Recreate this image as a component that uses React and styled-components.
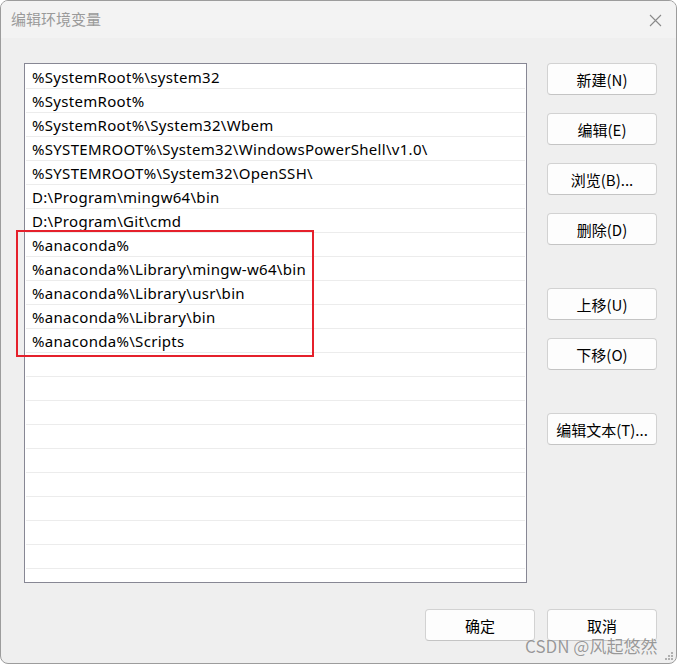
import React from "react";
import styled, { createGlobalStyle } from "styled-components";

const Global = createGlobalStyle`
  html, body { margin: 0; padding: 0; background: #ffffff; }
  body { font-family: "Noto Sans", "Noto Sans CJK SC", sans-serif; }
  * { box-sizing: border-box; }
`;

const Window = styled.div`
  position: relative;
  width: 677px;
  height: 664px;
  background: #efefef;
  border: 1px solid #9c9c9c;
  border-radius: 8px;
  overflow: hidden;
  display: flex;
  flex-direction: column;
`;

const TitleBar = styled.div`
  height: 37px;
  background: #f3f3f3;
  display: flex;
  align-items: center;
  justify-content: space-between;
  padding: 0 14px 0 10px;
`;

const Title = styled.span`
  font-family: "Noto Sans CJK SC", sans-serif;
  font-size: 15px;
  color: #9a9a9a;
  line-height: 1;
  margin-top: -3px;
`;

const Close = styled.div`
  width: 14px;
  height: 14px;
  display: flex;
  align-items: center;
  justify-content: center;
  margin-top: 1px;
`;

const Body = styled.div`
  display: flex;
  gap: 20px;
  padding: 25px 19px 0 23px;
`;

const List = styled.div`
  width: 504px;
  height: 520px;
  background: #ffffff;
  border: 1px solid #878794;
  padding: 1px 1px;
  overflow: hidden;
`;

const Row = styled.div`
  height: 24px;
  border-bottom: 1px solid #ececec;
  padding: 2px 0 0 6px;
  display: flex;
  align-items: center;
  font-family: "Noto Sans", "Noto Sans CJK SC", sans-serif;
  font-size: 15px;
  letter-spacing: 0.3px;
  color: #000;
  white-space: nowrap;
  line-height: 1;
`;

const Column = styled.div`
  display: flex;
  flex-direction: column;
`;

const Button = styled.button`
  width: 110px;
  height: 32px;
  margin-top: ${(p) => p.$gap || 0}px;
  background: #fdfdfd;
  border: 1px solid #d2d2d2;
  border-bottom-color: #c4c4c4;
  border-radius: 4px;
  font-family: "Noto Sans CJK SC", sans-serif;
  font-size: 15px;
  color: #000;
  padding: 0;
  display: flex;
  align-items: center;
  justify-content: center;
  line-height: 1;
`;

const Footer = styled.div`
  display: flex;
  justify-content: flex-end;
  gap: 12px;
  padding: 26px 19px 0 0;
`;

const Highlight = styled.div`
  position: absolute;
  left: 15px;
  top: 229px;
  width: 298px;
  height: 127px;
  border: 2px solid #e5202b;
  pointer-events: none;
`;

const Watermark = styled.div`
  position: absolute;
  left: 524px;
  top: 635px;
  font-family: "Noto Sans CJK SC", sans-serif;
  font-size: 17px;
  color: rgba(120, 120, 120, 0.75);
  text-shadow: 0 0 1px rgba(255, 255, 255, 0.8);
  white-space: nowrap;
  line-height: 1.2;
`;

const Grip = styled.svg`
  position: absolute;
  right: 2px;
  bottom: 2px;
`;

const paths = [
  "%SystemRoot%\\system32",
  "%SystemRoot%",
  "%SystemRoot%\\System32\\Wbem",
  "%SYSTEMROOT%\\System32\\WindowsPowerShell\\v1.0\\",
  "%SYSTEMROOT%\\System32\\OpenSSH\\",
  "D:\\Program\\mingw64\\bin",
  "D:\\Program\\Git\\cmd",
  "%anaconda%",
  "%anaconda%\\Library\\mingw-w64\\bin",
  "%anaconda%\\Library\\usr\\bin",
  "%anaconda%\\Library\\bin",
  "%anaconda%\\Scripts",
];

export default function App() {
  const rows = [...paths];
  while (rows.length < 22) rows.push("");
  return (
    <>
      <Global />
      <Window>
        <TitleBar>
          <Title>编辑环境变量</Title>
          <Close>
            <svg width="13" height="13" viewBox="0 0 13 13">
              <path d="M1 1 L12 12 M12 1 L1 12" stroke="#8a8a8a" strokeWidth="1.1" fill="none" />
            </svg>
          </Close>
        </TitleBar>
        <Body>
          <List>
            {rows.map((r, i) => (
              <Row key={i}>{r}</Row>
            ))}
          </List>
          <Column>
            <Button>新建(N)</Button>
            <Button $gap={18}>编辑(E)</Button>
            <Button $gap={18}>浏览(B)...</Button>
            <Button $gap={18}>删除(D)</Button>
            <Button $gap={43}>上移(U)</Button>
            <Button $gap={18}>下移(O)</Button>
            <Button $gap={43}>编辑文本(T)...</Button>
          </Column>
        </Body>
        <Footer>
          <Button>确定</Button>
          <Button>取消</Button>
        </Footer>
        <Highlight />
        <Watermark>CSDN @风起悠然</Watermark>
        <Grip width="10" height="10" viewBox="0 0 10 10">
          <rect x="7" y="1" width="2" height="2" fill="#b0b0b0" />
          <rect x="4" y="4" width="2" height="2" fill="#b0b0b0" />
          <rect x="7" y="4" width="2" height="2" fill="#b0b0b0" />
          <rect x="1" y="7" width="2" height="2" fill="#b0b0b0" />
          <rect x="4" y="7" width="2" height="2" fill="#b0b0b0" />
          <rect x="7" y="7" width="2" height="2" fill="#b0b0b0" />
        </Grip>
      </Window>
    </>
  );
}
